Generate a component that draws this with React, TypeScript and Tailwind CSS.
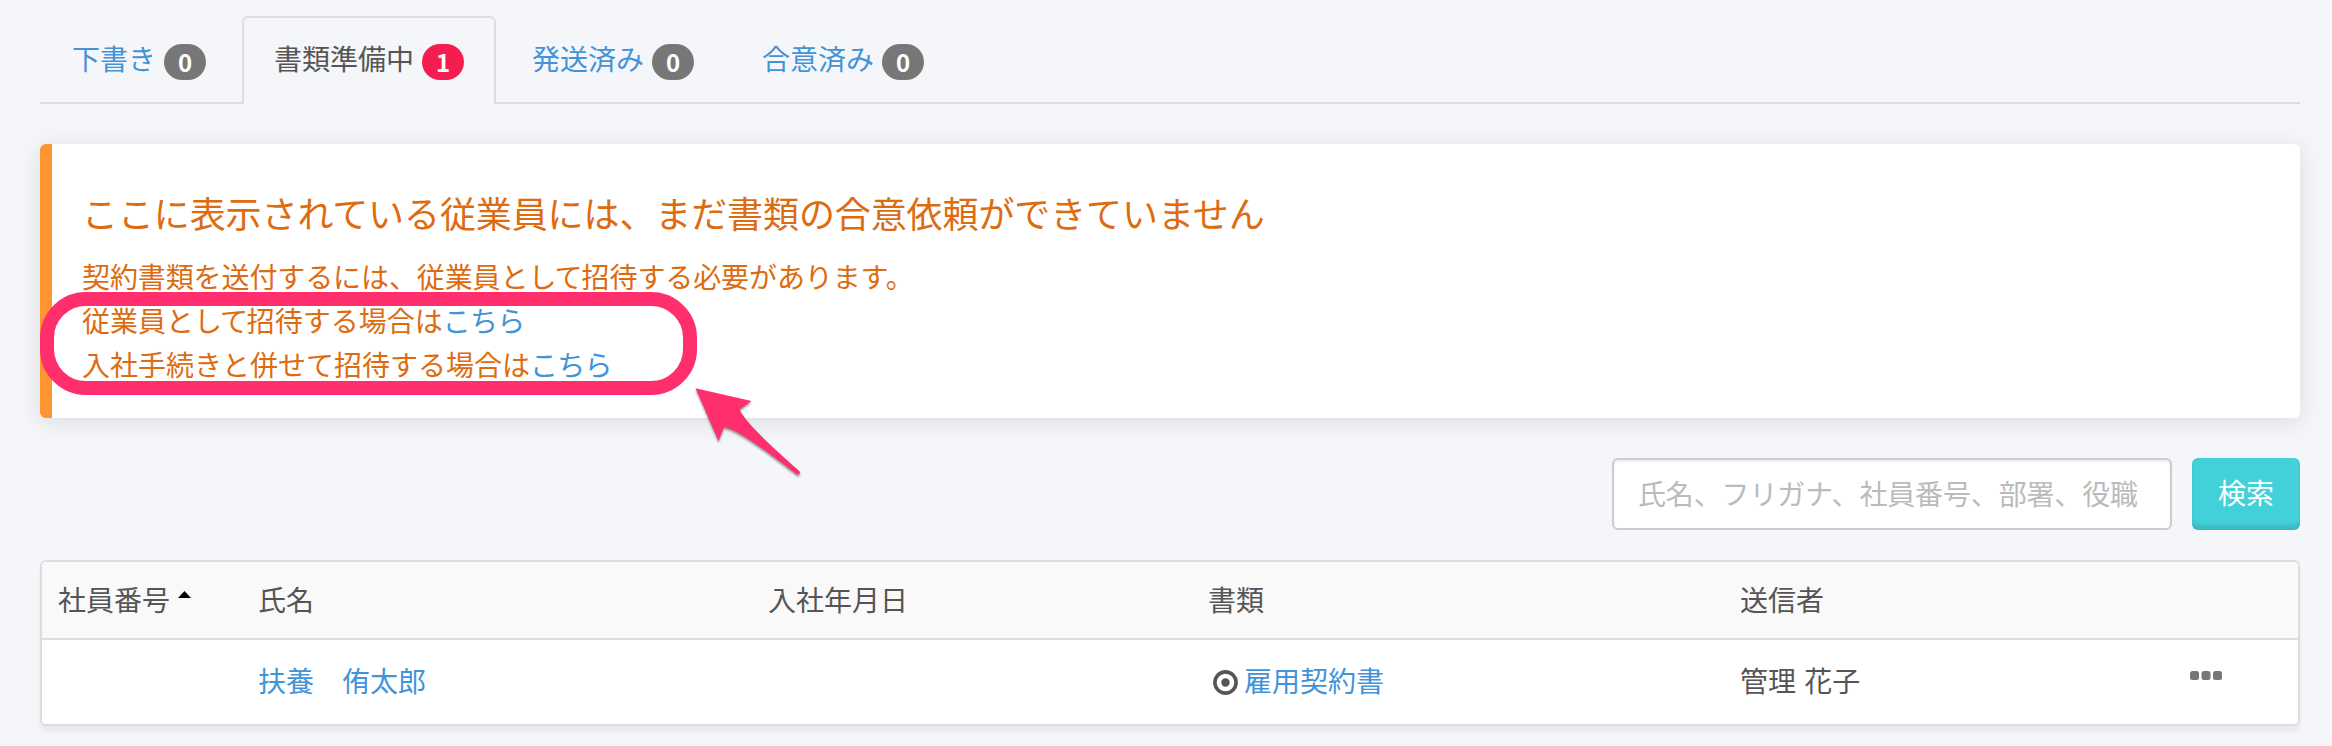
import React from "react";

const tabs = [
  { label: "下書き", count: 0, active: false },
  { label: "書類準備中", count: 1, active: true },
  { label: "発送済み", count: 0, active: false },
  { label: "合意済み", count: 0, active: false },
];

function Tabs() {
  return (
    <nav className="flex h-[88px] gap-1 border-b-2 border-[#dddddd]">
      {tabs.map((tab) => (
        <a
          key={tab.label}
          className={
            tab.active
              ? "flex h-[88px] w-[254px] gap-2 rounded-t-md border-2 border-b-0 border-[#dddddd] bg-[#f5f6fa] pl-[30px] text-[#555555]"
              : "flex h-[86px] justify-between gap-2 border-2 border-transparent px-[30px] text-[#4393d7]"
          }
        >
          <span className="mt-[18px] leading-[44px]">{tab.label}</span>
          <span
            className={
              tab.active
                ? "mt-[26px] flex h-9 w-[42px] items-center justify-center rounded-[20px] bg-[#f51d50] text-2xl font-bold text-white"
                : "mt-[26px] flex h-9 w-[42px] items-center justify-center rounded-[20px] bg-[#777777] text-2xl font-bold text-white"
            }
          >
            {tab.count}
          </span>
        </a>
      ))}
    </nav>
  );
}

function Annotation() {
  return (
    <>
      <div className="absolute top-[148px] left-0 h-[103px] w-[657px] rounded-[46px] border-[14px] border-[#ff2f6d]" />
      <svg className="absolute top-[240px] left-[652px] drop-shadow-[0_2px_1px_rgba(0,0,0,0.4)]" width="116" height="96" viewBox="0 0 116 96">
        <path d="M3.5 4.200 L59.500 17 L47.500 25.500 C54 38 69 53 107.500 87.300 Q109 91 105 90.500 C68 62 44 45 32 43 L26.500 57 Z" fill="#ff2f6d" />
      </svg>
    </>
  );
}

function Notice() {
  return (
    <section className="relative mt-10 h-[274px] rounded-md border-l-[12px] border-[#ff9530] bg-white pt-[43px] pl-[30px] text-[#dd6b10] shadow-[0_4px_24px_rgba(0,0,0,0.11)]">
      <h2 className="text-4xl leading-[50px] tracking-[-0.1px]">ここに表示されている従業員には、まだ書類の合意依頼ができていません</h2>
      <div className="mt-[17px] leading-[44px]">
        <p className="tracking-[-0.1px]">契約書類を送付するには、従業員と<span className="tracking-[-1px]">して</span>招待する必要があります。</p>
        <p>従業員と<span className="tracking-[-1.2px]">して</span>招待する場合は<a className="tracking-[-0.8px] text-[#4393d7]">こちら</a></p>
        <p>入社手続きと併せて招待する場合は<a className="tracking-[-0.8px] text-[#4393d7]">こちら</a></p>
      </div>
      <div className="absolute top-0 -left-3">
        <Annotation />
      </div>
    </section>
  );
}

function Search() {
  return (
    <form className="mt-10 flex justify-end gap-5">
      <input
        className="h-[72px] w-[560px] rounded-md border-2 border-[#cccccc] bg-white px-6 pb-[3px] tracking-[-0.15px] shadow-[inset_0_2px_2px_rgba(0,0,0,0.075)] placeholder:text-[#bbbbbb]"
        placeholder="氏名、フリガナ、社員番号、部署、役職"
      />
      <button type="button" className="h-[72px] w-[108px] rounded-md bg-[#43d1d9] pb-1 text-white shadow-[inset_0_-6px_4px_-1px_rgba(0,0,0,0.12)]">
        検索
      </button>
    </form>
  );
}

function Employees() {
  return (
    <div className="mt-[30px] h-[166px] rounded-md border-2 border-[#dddddd] bg-white shadow-[0_6px_4px_rgba(0,0,0,0.05)]">
      <div className="grid h-[78px] grid-cols-[200px_510px_440px_532px_1fr] items-center rounded-t-[4px] border-b-2 border-[#dddddd] bg-[#f9f9f9] pb-[3px] pl-4">
        <div className="flex items-center gap-2">
          社員番号
          <svg className="-mt-2" width="13" height="7" viewBox="0 0 13 7"><path d="M0 7 L6.500 0 L13 7 Z" fill="#000" /></svg>
        </div>
        <div>氏名</div>
        <div>入社年月日</div>
        <div>書類</div>
        <div>送信者</div>
      </div>
      <div className="grid h-[84px] grid-cols-[200px_510px_440px_532px_1fr] items-center pb-1 pl-4">
        <div />
        <a className="text-[#4393d7]">扶養　侑太郎</a>
        <div />
        <div className="flex items-center gap-1.5 pl-[5px]">
          <svg className="mt-1" width="25" height="25" viewBox="0 0 25 25">
            <circle cx="12.500" cy="12.500" r="10.600" fill="none" stroke="#555" strokeWidth="3.600" />
            <circle cx="12.500" cy="12.500" r="4.200" fill="#555" />
          </svg>
          <a className="text-[#4393d7]">雇用契約書</a>
        </div>
        <div className="flex items-center justify-between pr-[76px] [word-spacing:2px]">
          管理 花子
          <svg className="-mt-2.5" width="32" height="9" viewBox="0 0 32 9" fill="#777">
            <rect width="9" height="9" rx="2.500" />
            <rect x="11.500" width="9" height="9" rx="2.500" />
            <rect x="23" width="9" height="9" rx="2.500" />
          </svg>
        </div>
      </div>
    </div>
  );
}

export default function App() {
  return (
    <main className="h-[746px] overflow-hidden bg-[#f5f6fa] px-10 pr-8 pt-4 font-['Noto_Sans_CJK_JP',sans-serif] text-[28px] text-[#555555]">
      <Tabs />
      <Notice />
      <Search />
      <Employees />
    </main>
  );
}
